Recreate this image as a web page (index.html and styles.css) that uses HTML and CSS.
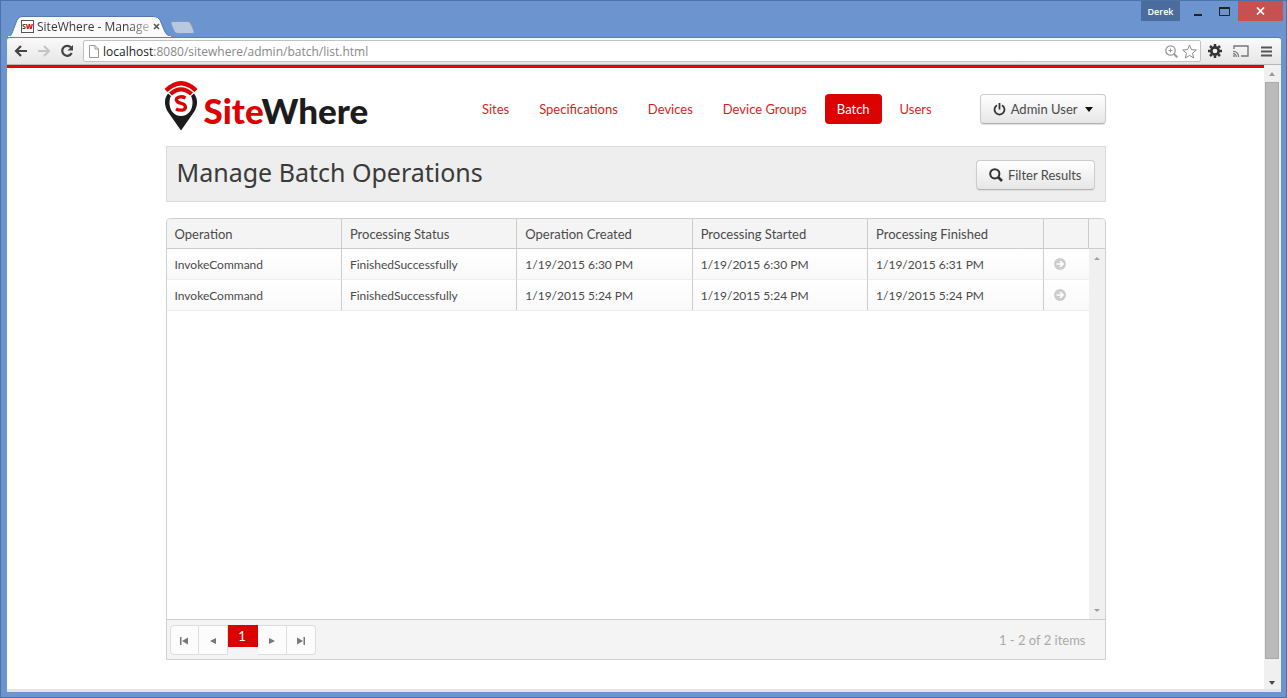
FILE: index.html
```html
<!DOCTYPE html>
<html lang="en">
<head>
<meta charset="utf-8">
<title>SiteWhere - Manage Batch Operations</title>
<link rel="stylesheet" href="styles.css">
</head>
<body>
<div class="window">
  <div class="titlebar">
    <div class="tab">
      <svg class="tab-shape" width="170" height="21" viewBox="0 0 170 21"><path d="M0 21C5 20 5 17 7 12L10 4Q12 .5 15 .5H147Q151 .5 153 4L158 16Q160 20 165 21Z" fill="#fafafa" stroke="#5479b0"/><path d="M1 20.500H164" stroke="#fafafa"/></svg>
      <span class="favicon">S<b>W</b></span>
      <span class="tab-title">SiteWhere - Manage</span>
      <button class="tab-close" aria-label="Close tab"><svg width="7" height="7" viewBox="0 0 7 7"><path d="M1 1l5 5M6 1L1 6" stroke="#555" stroke-width="1.600"/></svg></button>
    </div>
    <button class="new-tab" aria-label="New tab"><svg width="26" height="13" viewBox="0 0 26 13"><path d="M3 .5H18Q20 .5 21 3L24 10Q25 12.500 22 12.500H8Q5 12.500 4 10L1 3Q0 .5 3 .5Z" fill="#b9c8dc" stroke="#7b98c4"/></svg></button>
    <div class="window-buttons">
      <button class="profile">Derek</button>
      <button class="win-btn" aria-label="Minimize"><svg width="10" height="12"><path d="M1 9h8v2H1z" fill="#222"/></svg></button>
      <button class="win-btn" aria-label="Maximize"><svg width="11" height="9"><path d="M.5 1h10v7.500H.5z" fill="none" stroke="#222"/><path d="M0 1h11" stroke="#222" stroke-width="2"/></svg></button>
      <button class="win-btn win-close" aria-label="Close"><svg width="9" height="8" viewBox="0 0 9 8"><path d="M1 .5l7 7M8 .5l-7 7" stroke="#fff" stroke-width="1.700"/></svg></button>
    </div>
  </div>
  <div class="toolbar">
    <button class="tool" aria-label="Back"><svg width="14" height="12" viewBox="0 0 14 12"><path d="M13 6H2M7 1L2 6l5 5" fill="none" stroke="#444" stroke-width="2.200"/></svg></button>
    <button class="tool" aria-label="Forward"><svg width="14" height="12" viewBox="0 0 14 12"><path d="M1 6h11M7 1l5 5-5 5" fill="none" stroke="#c4c4c4" stroke-width="2"/></svg></button>
    <button class="tool" aria-label="Reload"><svg width="14" height="14" viewBox="0 0 14 14"><path d="M11 3.500A5 5 0 1 0 11.700 9" fill="none" stroke="#444" stroke-width="2.200"/><path d="M13 1v5.500H7.500z" fill="#444"/></svg></button>
    <div class="omnibox">
      <svg width="10" height="13" viewBox="0 0 10 13"><path d="M.5.5h5.500l3.500 3.500v8.500h-9zM6 .5V4h3.500" fill="#fff" stroke="#999"/></svg>
      <span class="url"><span class="host">localhost</span>:8080/sitewhere/admin/batch/list.html</span>
      <svg width="13" height="13" viewBox="0 0 13 13" fill="none" stroke="#999"><circle cx="5.500" cy="5.500" r="4.700" stroke-width="1.300"/><path d="M3.500 5.500h4M5.500 3.500v4"/><path d="M9 9l3.300 3.300" stroke-width="2"/></svg>
      <svg width="15" height="15" viewBox="0 0 15 15"><path d="M7.500 1l1.900 4.600 4.900.4-3.800 3.200 1.200 4.800-4.200-2.600L3.300 14l1.200-4.800L.7 6l4.900-.4z" fill="#fff" stroke="#8a8a8a"/></svg>
    </div>
    <button class="tool ext" aria-label="Extension"><svg width="14" height="14" viewBox="-7 -7 14 14"><circle r="3.700" fill="none" stroke="#333" stroke-width="2.700"/><path d="M0-4.500V-7M0 4.500V7M-4.500 0H-7M4.500 0H7M-3.300-3.300l-1.700-1.700M3.300 3.300L5 5M3.300-3.300L5-5M-3.300 3.300L-5 5" stroke="#333" stroke-width="2.500"/></svg></button>
    <button class="tool ext" aria-label="Cast"><svg width="16" height="12" viewBox="0 0 16 12" fill="none" stroke="#777"><path d="M1 4V1h14v10H8" stroke-width="1.400"/><path d="M0 6.500A5 5 0 0 1 5.500 12M0 8.700A3 3 0 0 1 3.300 12" stroke-width="1.200"/><circle cx="1" cy="11" r=".6"/></svg></button>
    <button class="tool ext" aria-label="Menu"><svg width="11" height="11"><path d="M0 1.500h11M0 5.500h11M0 9.500h11" stroke="#555" stroke-width="2"/></svg></button>
  </div>
  <div class="viewport">
    <div class="page">
      <div class="container">
        <header class="header">
          <a class="logo" href="#" aria-label="SiteWhere">
            <svg width="34" height="51" viewBox="0 0 34 51"><path d="M4 13.500C-1 20 1 27 4 32L17 50.500 30 32C33 27 35 20 30 13.500L27 16C31 24 27 36 17 36S3 24 7 16Z" fill="#1c1c1c"/><path d="M.5 9Q17-7 33.500 9L30.500 12Q17-1 3.500 12Z" fill="#dc0202"/><path d="M5 12.500Q17 2 29 12.500L26 15.500Q17 7.500 8 15.500Z" fill="#dc0202"/><path d="M21.500 18Q18 16 14.500 17.200C10.800 18.700 12.200 22.300 16.500 23.200C22 24.400 22.800 28 19.500 29.700Q16 31 12 29" fill="none" stroke="#dc0202" stroke-width="3.300"/></svg>
            <span class="wordmark"><span class="red">Site</span>Where</span>
          </a>
          <nav class="nav">
            <a href="#">Sites</a><a href="#">Specifications</a><a href="#">Devices</a><a href="#">Device Groups</a><a class="active" href="#">Batch</a><a href="#">Users</a>
          </nav>
          <button class="btn user"><svg width="13" height="13" viewBox="0 0 13 13" fill="none" stroke="#333" stroke-width="1.800"><path d="M4 2.200a5 5 0 1 0 5 0M6.500 0v6.500"/></svg>Admin User<svg class="caret" width="8" height="5"><path d="M0 0h8L4 5z" fill="#111"/></svg></button>
        </header>
        <div class="title-bar">
          <h1>Manage Batch Operations</h1>
          <button class="btn"><svg width="14" height="14" viewBox="0 0 14 14" fill="none" stroke="#333"><circle cx="5.800" cy="5.800" r="4.600" stroke-width="2"/><path d="M9 9l4 4" stroke-width="2.600"/></svg>Filter Results</button>
        </div>
        <section class="grid">
          <div class="grid-head">
            <table>
              <colgroup><col><col><col><col><col><col class="go"></colgroup>
              <thead><tr><th>Operation</th><th>Processing Status</th><th>Operation Created</th><th>Processing Started</th><th>Processing Finished</th><th></th></tr></thead>
            </table>
          </div>
          <div class="grid-body">
            <table>
              <colgroup><col><col><col><col><col><col class="go"></colgroup>
              <tbody>
                <tr><td>InvokeCommand</td><td>FinishedSuccessfully</td><td>1/19/2015 6:30 PM</td><td>1/19/2015 6:30 PM</td><td>1/19/2015 6:31 PM</td><td><a class="open" href="#" aria-label="Open"><svg width="12" height="12" viewBox="0 0 12 12"><circle cx="6" cy="6" r="6" fill="#ccc"/><path d="M2.500 6h6M6 3l3 3-3 3" fill="none" stroke="#fff" stroke-width="1.700"/></svg></a></td></tr>
                <tr><td>InvokeCommand</td><td>FinishedSuccessfully</td><td>1/19/2015 5:24 PM</td><td>1/19/2015 5:24 PM</td><td>1/19/2015 5:24 PM</td><td><a class="open" href="#" aria-label="Open"><svg width="12" height="12" viewBox="0 0 12 12"><circle cx="6" cy="6" r="6" fill="#ccc"/><path d="M2.500 6h6M6 3l3 3-3 3" fill="none" stroke="#fff" stroke-width="1.700"/></svg></a></td></tr>
              </tbody>
            </table>
            <div class="grid-scroll"><svg width="6" height="3"><path d="M0 3h6L3 0z" fill="#a0a0a0"/></svg><svg width="6" height="3"><path d="M0 0h6L3 3z" fill="#a0a0a0"/></svg></div>
          </div>
          <div class="pager">
            <div class="pages">
              <button aria-label="First page"><svg width="8" height="8"><path d="M0 0h1.500v8H0zM8 .5v7L2 4z" fill="#777"/></svg></button>
              <button aria-label="Previous page"><svg width="6" height="6"><path d="M6 0v6L0 3z" fill="#777"/></svg></button>
              <button class="current">1</button>
              <button aria-label="Next page"><svg width="6" height="6"><path d="M0 0v6l6-3z" fill="#777"/></svg></button>
              <button aria-label="Last page"><svg width="8" height="8"><path d="M6.500 0H8v8H6.500zM0 .5v7L6 4z" fill="#777"/></svg></button>
            </div>
            <span class="count">1 - 2 of 2 items</span>
          </div>
        </section>
      </div>
    </div>
    <div class="scrollbar"><svg width="6" height="4"><path d="M0 4h6L3 0z" fill="#999"/></svg><div class="thumb"></div><svg width="6" height="4"><path d="M0 0h6L3 4z" fill="#444"/></svg></div>
  </div>
</div>
</body>
</html>
```
FILE: styles.css
```css
* { box-sizing: border-box; }
body { margin: 0; font-family: Lato, "Liberation Sans", sans-serif; font-size: 13px; color: #4a4a4a; }
button { font: inherit; color: inherit; border: 0; background: none; padding: 0; display: flex; align-items: center; justify-content: center; }
a { text-decoration: none; color: #dc1c1c; }
svg { display: block; flex: none; }
h1 { margin: 0; font-weight: 400; }

.window { display: flex; flex-direction: column; height: 100vh; background: #6c94cf; border: 1px solid #4d72aa; padding: 0 5px 5px 6px; }

.titlebar { display: flex; align-items: flex-end; height: 36px; flex: none; }
.tab { position: relative; display: flex; align-items: center; width: 163px; height: 21px; padding-left: 14px; font-family: "Open Sans", sans-serif; font-size: 12px; color: #333; }
.tab-shape { position: absolute; left: 0; top: 0; }
.favicon { position: relative; width: 13px; height: 13px; border: 1px solid #555; background: #fff; font-size: 7px; font-weight: 700; line-height: 11px; text-align: center; }
.favicon b { color: #dc0202; }
.tab-title { position: relative; margin-left: 3px; white-space: nowrap; background: linear-gradient(90deg, #333 80%, #bbb); background-clip: text; color: transparent; }
.tab-close { position: relative; margin-left: 4px; }
.new-tab { margin: 0 0 3px 0; }
.window-buttons { display: flex; align-self: flex-start; margin-left: auto; margin-right: -2px; height: 20px; }
.profile { width: 39px; margin-right: 4px; background: #4b6c9e; color: #fff; font-family: "Open Sans", sans-serif; font-size: 9px; font-weight: 600; }
.win-btn { width: 27px; }
.win-close { width: 45px; background: #c75050; }

.toolbar { display: flex; align-items: center; height: 28px; flex: none; padding: 0 8px 0 7px; gap: 9px; background: linear-gradient(#fafafa, #e6e6e6); border-top: 1px solid #5a7fb5; border-bottom: 1px solid #b5b5b5; border-radius: 3px 3px 0 0; }
.omnibox { display: flex; flex: 1; align-items: center; gap: 4px; height: 22px; padding: 0 3px 0 5px; background: #fff; border: 1px solid #c2c2c2; border-radius: 2px; }
.omnibox + .ext { margin-left: -2px; }
.url { flex: 1; font-family: "Open Sans", sans-serif; font-size: 12px; color: #888; }
.host { color: #222; }
.ext { min-width: 13px; }
.ext + .ext { margin-left: 2px; }

.viewport { display: flex; flex: 1; min-height: 0; background: #fff; border-bottom: 3px solid #e4e4e4; }
.page { flex: 1; overflow: hidden; border-top: 3px solid #e80202; }
.container { max-width: 940px; margin: 0 auto; padding-top: 13px; }
.scrollbar { display: flex; flex-direction: column; align-items: center; width: 17px; padding: 7px 2px 4px 1px; gap: 6px; background: #f0f0f0; }
.thumb { width: 14px; flex: 1; margin-bottom: 16px; background: #bababa; border: 1px solid #aaa; }

.header { display: flex; align-items: center; height: 56px; }
.logo { display: flex; align-items: center; gap: 6px; margin: -8px 0 0 -2px; color: #1c1c1c; }
.wordmark { padding-top: 10px; font-size: 35px; font-weight: 900; line-height: 40px; }
.red { color: #dc0202; }
.nav { display: flex; gap: 6px; margin-left: auto; margin-right: 36px; }
.nav a { padding: 0 12px; line-height: 30px; border-radius: 4px; white-space: nowrap; }
.nav .active { background: #dc0202; color: #fff; }
.btn { height: 30px; padding: 0 12px; gap: 5px; white-space: nowrap; background: linear-gradient(#fff, #e6e6e6); border: 1px solid #ccc; border-bottom-color: #b3b3b3; border-radius: 4px; box-shadow: 0 1px 1px #ddd; }
.caret { margin-left: 2px; }

.title-bar { display: flex; justify-content: space-between; align-items: center; height: 56px; margin: 9px 0 16px; padding: 2px 10px 0; background: #eee; border: 1px solid #dadada; }
.title-bar h1 { padding-bottom: 6px; font-family: "Noto Sans", sans-serif; font-size: 25px; line-height: 36px; color: #3a3a3a; }

.grid { border: 1px solid #d0d0d0; border-radius: 4px 4px 0 0; }
table { flex: 1; width: 100%; table-layout: fixed; border-collapse: separate; border-spacing: 0; }
.go { width: 45px; }
.grid-head { padding-right: 16px; background: #f4f4f4; border-bottom: 1px solid #ccc; border-radius: 4px 4px 0 0; }
th, td { height: 29px; padding: 0 8px; text-align: left; font-weight: 400; white-space: nowrap; }
th { border-right: 1px solid #ccc; }
td { height: 31px; border-right: 1px solid #ccc; border-bottom: 1px solid #eee; background: linear-gradient(#fff, #f9f9f9); font-size: 12px; }
td:last-child { border-right: 0; }
.open { display: block; padding-left: 2px; }
.grid-body { display: flex; align-items: flex-start; height: 370px; }
.grid-scroll { display: flex; flex-direction: column; justify-content: space-between; align-items: center; align-self: stretch; width: 16px; padding: 8px 0 7px; background: #f0f0f0; }
.pager { display: flex; align-items: center; justify-content: space-between; height: 40px; padding: 0 19px 0 3px; background: #f4f4f4; border-top: 1px solid #ccc; color: #aaa; }
.pages { display: flex; align-items: flex-start; }
.pages button { width: 29px; height: 30px; padding-top: 2px; background: #fcfcfc; border: 1px solid #ddd; border-left-width: 0; }
.pages button:first-child { border-left-width: 1px; border-radius: 4px 0 0 4px; }
.pages button:last-child { border-radius: 0 4px 4px 0; }
.pages .current { width: 30px; height: 22px; padding: 0; background: #dc0202; border-color: #dc0202; color: #fff; }
```
